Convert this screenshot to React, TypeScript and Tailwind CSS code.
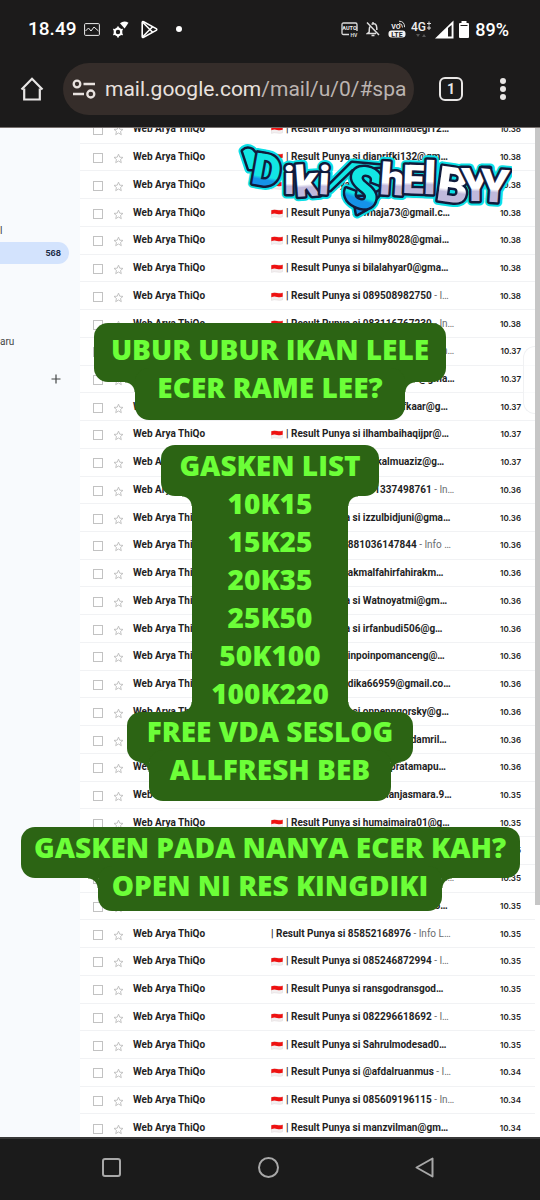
import React from "react";

type Mail = {
  name: string;
  time: string;
  rest?: string;
  flag?: boolean;
};

const mails: Mail[] = [
  { name: "Muhammadegi12…", time: "10.38" },
  { name: "dianrifki132@gm…", time: "10.38" },
  { name: "ardiansyah22@…", time: "10.38" },
  { name: "wnaja73@gmail.c…", time: "10.38" },
  { name: "hilmy8028@gmai…", time: "10.38" },
  { name: "bilalahyar0@gma…", time: "10.38" },
  { name: "089508982750", rest: " - I…", time: "10.38" },
  { name: "083116767230", rest: " - In…", time: "10.38" },
  { name: "081288340915", rest: " - In…", time: "10.37" },
  { name: "nandasari03@gma…", time: "10.37" },
  { name: "imamtaufkaar@g…", time: "10.37" },
  { name: "ilhambaihaqijpr@…", time: "10.37" },
  { name: "haikalmuaziz@g…", time: "10.37" },
  { name: "081337498761", rest: " - In…", time: "10.36" },
  { name: "izzulbidjuni@gma…", time: "10.36" },
  { name: "881036147844", rest: " - Info …", time: "10.36", flag: false },
  { name: "akmalfahirfahirakm…", time: "10.36", flag: false },
  { name: "Watnoyatmi@gm…", time: "10.36" },
  { name: "irfanbudi506@g…", time: "10.36" },
  { name: "inpoinpomanceng@…", time: "10.36", flag: false },
  { name: "dika66959@gmail.co…", time: "10.36", flag: false },
  { name: "onpenngorsky@g…", time: "10.36" },
  { name: "muhammadamril…", time: "10.36" },
  { name: "adityapratamapu…", time: "10.36" },
  { name: "mahrianjasmara.9…", time: "10.35" },
  { name: "humaimaira01@g…", time: "10.35" },
  { name: "rahmat@gmail…", time: "10.35" },
  { name: "085712349080", rest: " - In…", time: "10.35" },
  { name: "bagusdwi200666…", time: "10.35" },
  { name: "85852168976", rest: " - Info L…", time: "10.35", flag: false },
  { name: "085246872994", rest: " - I…", time: "10.35" },
  { name: "ransgodransgod…", time: "10.35" },
  { name: "082296618692", rest: " - I…", time: "10.35" },
  { name: "Sahrulmodesad0…", time: "10.35" },
  { name: "@afdalruanmus", rest: " - I…", time: "10.34" },
  { name: "085609196115", rest: " - In…", time: "10.34" },
  { name: "manzvilman@gm…", time: "10.34" },
];

function Flag() {
  return (
    <svg viewBox="0 0 12 9" className="mt-px h-[9px] w-3 shrink-0" aria-hidden="true">
      <path d="M.5 1.2Q3 .2 6 1t5.500-.2v7Q9 8.700 6 8T.5 8.400z" fill="#f3eff0" stroke="#dcd7d9" strokeWidth=".5" />
      <path d="M.3 1.200Q3 .2 6 1t5.700-.2v4Q9 5.600 6 4.900T.3 5.200z" fill="#ee1111" />
    </svg>
  );
}

function MailRow({ mail }: { mail: Mail }) {
  return (
    <li className="flex min-h-6 flex-1 items-center border-b border-[#f1f2f4] pl-[13px] pr-[14px] text-[10px] leading-4 text-[#1f1f1f]">
      <input
        type="checkbox"
        aria-label={"Pilih " + mail.name}
        className="mt-[2px] size-[10px] shrink-0 appearance-none border border-[#c2c2c2] bg-white"
      />
      <button aria-label={"Bintangi " + mail.name} className="ml-[10px] mt-[3px] shrink-0">
        <svg viewBox="0 0 24 24" className="size-[11px]" fill="none" stroke="#bdbdbd" strokeWidth="2">
          <path d="m12 2.500 2.700 6.600 7.100.5-5.400 4.600 1.700 6.900-6.100-3.700-6.100 3.700 1.700-6.900-5.400-4.600 7.100-.5z" />
        </svg>
      </button>
      <span className="ml-[9px] w-[138px] shrink-0 font-bold">Web Arya ThiQo</span>
      <span className="flex min-w-0 flex-1 items-center gap-[3px] whitespace-nowrap">
        {mail.flag !== false && <Flag />}
        <span className="whitespace-pre font-bold">
          | Result Punya si {mail.name}
          <span className="font-normal text-[#6b6d70]">{mail.rest}</span>
        </span>
      </span>
      <time className="shrink-0 font-['Inter'] text-[8px] font-semibold">{mail.time}</time>
    </li>
  );
}

function StatusBar() {
  return (
    <div className="flex h-[58px] items-center pl-7 pr-[31px] text-[19px] font-medium text-white">
      <time>18.49</time>
      <svg viewBox="0 0 16 13" className="ml-2 h-[13px] w-4" fill="none" stroke="#eee">
        <rect x=".6" y=".6" width="14.800" height="11.800" rx="1" />
        <path d="m1.500 8 3-3 2.500 3 3-4 4.500 4" />
      </svg>
      <svg viewBox="0 0 17 17" className="ml-3 size-[17px]" fill="none" stroke="#fff">
        <circle cx="6" cy="11" r="3.300" strokeWidth="2.200" />
        <path d="M6 5.600v2M6 14.400v2M1.300 8.300 3 9.300M9 12.700l1.700 1M1.300 13.700l1.700-1M9 9.300l1.700-1" strokeWidth="1.700" />
        <path d="M8 2.200Q12-.8 16.500 1.800L12.600 7.500z" fill="#fff" stroke="none" />
      </svg>
      <svg viewBox="0 0 17 19" className="ml-3 h-[19px] w-[17px]" fill="none" stroke="#fff" strokeWidth="1.600" strokeLinejoin="round">
        <path d="M1.200 2.600v13.800q0 1.500 1.400.8l12.600-6.800q1.200-.9 0-1.800L2.600 1.800q-1.400-.7-1.400.8z" />
        <path d="m1.700 2.300 9.900 10M1.700 16.700l9.900-10" />
      </svg>
      <span className="ml-[18px] size-[6px] rounded-full bg-white" />
      <span className="flex-1" />
      <svg viewBox="0 0 17 15" className="h-[15px] w-[17px]" aria-hidden="true">
        <path d="M8 12.500H2.500Q1 12.500 1 11V2.500Q1 1 2.500 1h12Q16 1 16 2.500V9" fill="none" stroke="#ddd" strokeWidth="1.300" />
        <text x="8.500" y="7.800" textAnchor="middle" fontSize="5.500" fontWeight="700" fill="#eee">AUTO</text>
        <text x="13" y="14.600" textAnchor="middle" fontSize="5" fontWeight="700" fill="#ddd">HV</text>
      </svg>
      <svg viewBox="0 0 14 16" className="ml-2 h-4 w-[14px]" fill="none" stroke="#ddd" strokeWidth="1.500">
        <path d="m1 1.500 12 12.500M4.200 5C3.300 6 3.200 7.500 3.200 11L1.500 12.500H10M5.500 3.300Q10.600 1.200 10.800 7v2M7 1v2M5.500 14.500h3" />
      </svg>
      <svg viewBox="0 0 18 18" className="ml-2 h-[18px] w-[18px]" aria-hidden="true">
        <text x="8" y="9" textAnchor="middle" fontSize="7" fontWeight="700" fill="#eee">VO</text>
        <path d="M11 3.500q3.500 0 3.500 4M11 1.200q5.600 0 5.600 6" fill="none" stroke="#ddd" />
        <rect x=".5" y="10.500" width="17" height="7" rx="3" fill="#f2f2f2" />
        <text x="9" y="16.500" textAnchor="middle" fontSize="7" fontWeight="700" fill="#1c1b1b">LTE</text>
      </svg>
      <svg viewBox="0 0 20 19" className="ml-[5px] h-[19px] w-5" aria-hidden="true">
        <text x="0" y="10.500" fontSize="12" fontWeight="500" fill="#eee">4G</text>
        <path d="M16 3.500h4M18 1.500v4M16 8h4M18 6v4" stroke="#ddd" />
        <path d="m5 14h4l-2 3zM11 17h4l-2-3z" fill="#555" />
      </svg>
      <svg viewBox="0 0 19 19" className="ml-1 size-[19px]" aria-hidden="true">
        <path d="M0 18.500 18.500.500v18z" fill="#fff" />
        <path d="M13 8v8.500h3.600V5z" fill="#1c1b1b" />
      </svg>
      <svg viewBox="0 0 10 17" className="ml-[5px] h-[17px] w-[10px]" fill="#fff">
        <rect x="2.500" width="5" height="2" />
        <rect y="2" width="10" height="15" rx="1" />
        <path d="M1.500 4.500h7" stroke="#1c1b1b" />
      </svg>
      <span className="ml-[6px] text-[18px]">89%</span>
    </div>
  );
}

function AddressBar() {
  return (
    <div className="flex h-[69px] items-center pb-[7px] pl-5 pr-[34px]">
      <button aria-label="Beranda">
        <svg viewBox="0 0 24 24" className="size-6" fill="none" stroke="#e8e6e5" strokeWidth="2.200" strokeLinejoin="miter">
          <path d="M4.200 11.500v11h15.600v-11" />
          <path d="M1.500 12.500 12 1.800 22.500 12.500" />
        </svg>
      </button>
      <div className="ml-[19px] flex h-[52px] min-w-0 flex-1 items-center rounded-full bg-[#352d2a] pl-[9px] pr-2">
        <svg viewBox="0 0 24 20" className="h-5 w-6 shrink-0" fill="none" stroke="#e8e2df" strokeWidth="2.300">
          <circle cx="5" cy="5" r="3.300" />
          <path d="M11.500 5H23M1 15h11" />
          <circle cx="18.800" cy="15" r="3.500" />
        </svg>
        <span className="ml-[9px] overflow-hidden whitespace-nowrap text-[21px] leading-7 text-[#e8e1de]">
          mail.google.com<span className="text-[#bcb4b1]">/mail/u/0/#spa</span>
        </span>
      </div>
      <button aria-label="Tab" className="ml-[25px] size-6 rounded-[6px] border-2 border-[#e8e6e5] text-[14px] font-bold leading-5 text-[#e8e6e5]">
        1
      </button>
      <button aria-label="Menu" className="ml-[37px] flex w-[6px] flex-col items-center gap-[2px]">
        <span className="size-[6px] rounded-full bg-[#e8e6e5]" />
        <span className="size-[6px] rounded-full bg-[#e8e6e5]" />
        <span className="size-[6px] rounded-full bg-[#e8e6e5]" />
      </button>
    </div>
  );
}

function Sidebar() {
  return (
    <nav className="flex w-20 shrink-0 flex-col bg-[#f8fafd] text-[10px] text-[#444746]">
      <span className="mt-[94px] h-5 leading-[18px]">l</span>
      <a href="#spam" className="mr-[11px] flex h-[22px] items-center justify-end rounded-r-full bg-[#d3e3fd] pb-px pr-2 font-['Inter'] text-[8px] font-bold text-[#1b2b45]">
        568
      </a>
      <span className="mt-[70px] h-4 leading-4">aru</span>
      <button aria-label="Buat label baru" className="mr-[19px] mt-6 self-end">
        <svg viewBox="0 0 10 10" className="size-[10px]" stroke="#444746" strokeWidth="1.200">
          <path d="M5 .5v9M.5 5h9" />
        </svg>
      </button>
    </nav>
  );
}

function Bends({ at }: { at: "top" | "topShallow" | "bottom" }) {
  if (at === "bottom") {
    return (
      <>
        <i className="absolute -left-[10px] bottom-0 size-[10px] bg-[radial-gradient(circle_at_0_0,transparent_9px,#2c6414_10px)]" />
        <i className="absolute -right-[10px] bottom-0 size-[10px] bg-[radial-gradient(circle_at_100%_0,transparent_9px,#2c6414_10px)]" />
      </>
    );
  }
  const top = at === "top" ? "top-[14px]" : "top-3";
  return (
    <>
      <i className={"absolute -left-[10px] size-[10px] bg-[radial-gradient(circle_at_0_100%,transparent_9px,#2c6414_10px)] " + top} />
      <i className={"absolute -right-[10px] size-[10px] bg-[radial-gradient(circle_at_100%_100%,transparent_9px,#2c6414_10px)] " + top} />
    </>
  );
}

function Stickers() {
  const box = "relative rounded-[14px] bg-[#2c6414] whitespace-nowrap ";
  return (
    <div className="absolute inset-x-0 top-[195px] flex flex-col items-center text-center font-['Open_Sans'] text-[28px] font-extrabold leading-[38px] text-[#6cff38]">
      <div className="flex flex-col items-center">
        <p className={box + "w-[352px] pb-[14px] pt-[7px]"}>UBUR UBUR IKAN LELE</p>
        <p className={box + "-mt-[14px] w-[270px] pb-[14px]"}>
          ECER RAME LEE?
          <Bends at="top" />
        </p>
      </div>
      <div className="mt-[25px] flex flex-col items-center">
        <p className={box + "w-[218px] pb-3 pt-px"}>GASKEN LIST</p>
        <div className="relative -mt-3 flex w-[156px] flex-col bg-[#2c6414]">
          <p>10K15</p>
          <p>15K25</p>
          <p>20K35</p>
          <p>25K50</p>
          <p>50K100</p>
          <p>100K220</p>
          <Bends at="topShallow" />
          <Bends at="bottom" />
        </div>
        <p className={box + "w-[286px] pb-3"}>FREE VDA SESLOG</p>
        <p className={box + "-mt-3 w-[242px] pb-[13px]"}>
          ALLFRESH BEB
          <Bends at="topShallow" />
        </p>
      </div>
      <div className="mt-[26px] flex flex-col items-center">
        <p className={box + "w-[499px] pb-3 pt-px"}>GASKEN PADA NANYA ECER KAH?</p>
        <p className={box + "-mt-3 w-[344px] pb-[7px]"}>
          OPEN NI RES KINGDIKI
          <Bends at="topShallow" />
        </p>
      </div>
    </div>
  );
}

type Glyph = { c: string; x: number; y: number; size: number; turn: number; aqua?: boolean };

const glyphs: Glyph[] = [
  { c: "D", x: 14, y: 44, size: 44, turn: 10, aqua: true },
  { c: "S", x: 104, y: 61, size: 56, turn: 20, aqua: true },
  { c: "i", x: 48, y: 55, size: 38, turn: 0 },
  { c: "k", x: 60, y: 58, size: 43, turn: -4 },
  { c: "i", x: 82, y: 55, size: 40, turn: 3 },
  { c: "h", x: 143, y: 55, size: 44, turn: 4 },
  { c: "E", x: 166, y: 54, size: 40, turn: 2 },
  { c: "l", x: 187, y: 55, size: 46, turn: 2 },
  { c: "B", x: 199, y: 61, size: 49, turn: 8 },
  { c: "Y", x: 225, y: 62, size: 46, turn: 0 },
  { c: "Y", x: 243, y: 62, size: 46, turn: 4 },
];

const shapes = [
  { d: "M7 12Q11 8 16 11L24 20 19 30 13 30Z", fill: "#12e6e4" },
  { d: "M149 27 116 30 94 51 88 52 116 24Z", fill: "#12e6e4" },
  { d: "M118 58 133 58 148 50 130 70 121 75Z", fill: "#1593e8" },
];

function LogoLayer({ stroke, width, glow }: { stroke: string; width: number; glow: boolean }) {
  return (
    <g stroke={stroke} strokeWidth={width} strokeLinejoin="round" paintOrder="stroke" fontFamily="Roboto" fontWeight="900" aria-hidden={glow}>
      {shapes.map((s) => (
        <path key={s.d} d={s.d} fill={glow ? stroke : s.fill} />
      ))}
      {glyphs.map((g, i) => (
        <text
          key={i}
          x={g.x}
          y={g.y}
          fontSize={g.size}
          transform={`rotate(${g.turn} ${g.x} ${g.y})`}
          fill={glow ? stroke : g.aqua ? "url(#aqua)" : "url(#pearl)"}
        >
          {g.c}
        </text>
      ))}
    </g>
  );
}

function Logo() {
  return (
    <svg viewBox="0 0 276 80" role="img" aria-label="DikiShelBYY" className="absolute right-[28px] top-[11px] h-20 w-[276px]">
      <defs>
        <linearGradient id="aqua" x1="0" y1="0" x2="0" y2="1">
          <stop offset=".62" stopColor="#12e6e4" />
          <stop offset=".68" stopColor="#1593e8" />
        </linearGradient>
        <linearGradient id="pearl" x1="0" y1="0" x2="0" y2="1">
          <stop offset=".56" stopColor="#ffffff" />
          <stop offset=".62" stopColor="#c0b9dc" />
        </linearGradient>
      </defs>
      <LogoLayer stroke="#0bdfe6" width={9} glow />
      <LogoLayer stroke="#101b3c" width={5} glow={false} />
    </svg>
  );
}

function SystemNav() {
  return (
    <footer className="flex h-[63px] shrink-0 items-center justify-between border-t-2 border-[#383838] bg-[#1b1b1b] pb-1 pl-[102px] pr-[106px]">
      <button aria-label="Aplikasi terbaru" className="size-[19px] rounded-[3px] border-2 border-[#a8a8a8]" />
      <button aria-label="Layar utama" className="size-[21px] rounded-full border-2 border-[#a8a8a8]" />
      <button aria-label="Kembali">
        <svg viewBox="0 0 19 21" className="h-[21px] w-[19px]" fill="none" stroke="#a8a8a8" strokeWidth="2" strokeLinejoin="round">
          <path d="M17.500 1.500v18L1.500 10.500z" />
        </svg>
      </button>
    </footer>
  );
}

export default function App() {
  return (
    <div className="flex h-screen flex-col overflow-hidden bg-white font-['Roboto',sans-serif]">
      <header className="shrink-0 bg-[#1c1b1b]">
        <StatusBar />
        <AddressBar />
      </header>
      <main className="relative flex min-h-0 flex-1 overflow-hidden border-t border-[#77716f]">
        <Sidebar />
        <ul className="-mb-[5px] -mt-3 flex min-w-0 flex-1 flex-col">
          {mails.map((mail, i) => (
            <MailRow key={i} mail={mail} />
          ))}
        </ul>
        <div className="w-[5px] shrink-0">
          <div className="h-[77%] bg-[#c6c6c6]" />
        </div>
        <aside className="absolute right-[5px] top-[218px] h-[68px] w-3 rounded-l-xl border border-r-0 border-[#f0f1f3] bg-white/60" />
        <Logo />
        <Stickers />
      </main>
      <SystemNav />
    </div>
  );
}
